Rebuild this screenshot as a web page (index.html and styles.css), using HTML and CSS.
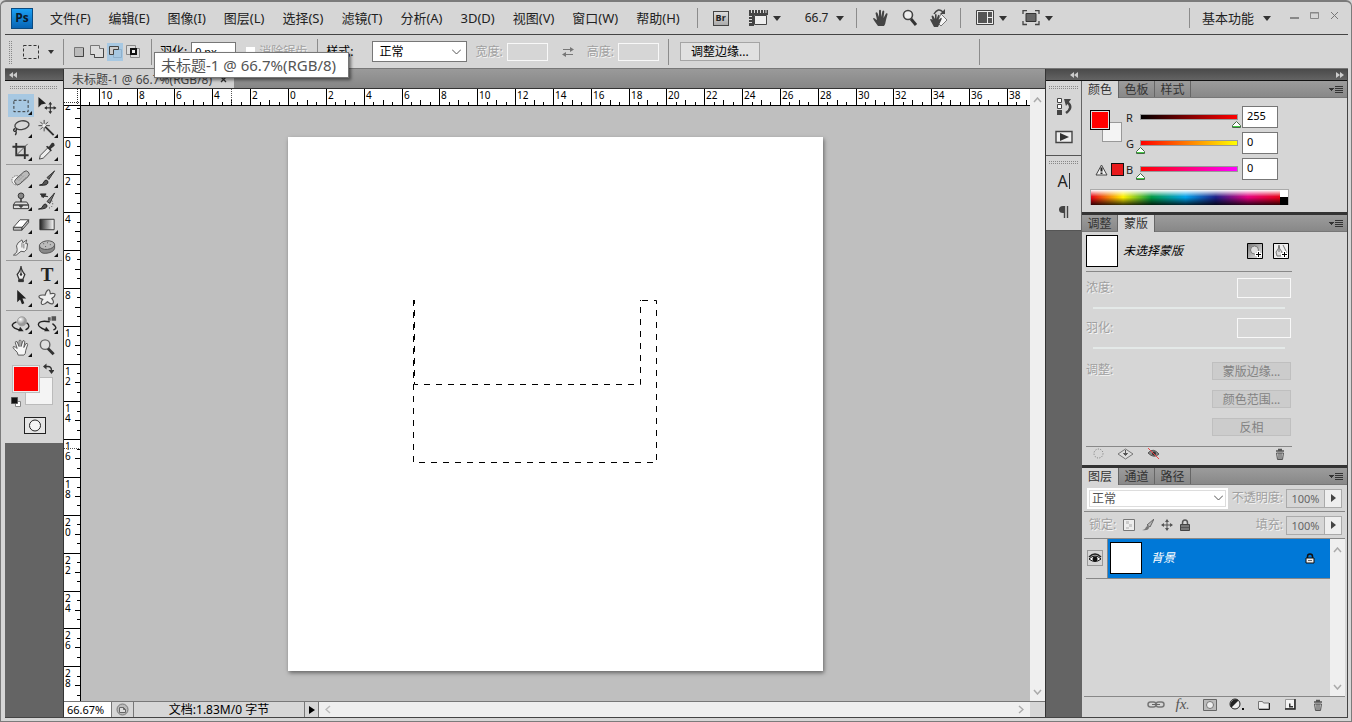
FILE: index.html
```html
<!DOCTYPE html>
<html lang="zh-CN">
<head>
    <meta charset="UTF-8">
    <meta name="viewport" content="width=device-width, initial-scale=1.0">
    <title>未标题-1 @ 66.7%(RGB/8)</title>
    <link rel="stylesheet" href="styles.css">
</head>
<body>
<div class="window">
    <header class="app-bar">
        <span class="logo">Ps</span>
        <nav class="menu">
            <button>文件(F)</button>
            <button>编辑(E)</button>
            <button>图像(I)</button>
            <button>图层(L)</button>
            <button>选择(S)</button>
            <button>滤镜(T)</button>
            <button>分析(A)</button>
            <button>3D(D)</button>
            <button>视图(V)</button>
            <button>窗口(W)</button>
            <button>帮助(H)</button>
        </nav>
        <span class="sep"></span>
        <div class="app-tools">
            <button class="bridge" aria-label="Bridge">Br</button>
            <button class="drop" aria-label="查看额外内容">
                <svg width="19" height="16" viewBox="0 0 19 16"><path d="M0 0h19v5H0zM0 5h5v11H0z" fill="#444"/><path d="M2.500 0v3M5.500 0v3M8.500 0v3M11.500 0v3M14.500 0v3M17 0v3M0 6.500h3M0 9.500h3M0 12.500h3" stroke="#ddd"/><path d="M5.500 5.500h12v9h-12z" fill="#eee" stroke="#444"/></svg>
                <i class="caret"></i>
            </button>
            <button class="drop zoom-level">66.7<i class="caret"></i></button>
        </div>
        <span class="sep"></span>
        <div class="app-tools app-tools-view">
            <button aria-label="抓手"><svg width="18" height="18" viewBox="0 0 18 18"><path d="M6 17C4 14 2 12 1 9.500q1-1.500 3 1L5 11 3.500 4q1-1.500 2 0L7 8V1.500q1-1.300 2 0V8l1.500-6q1.200-1 1.800.4L11.500 9 14 4.500q1.500-.8 1.600.6L14 11q-.5 4-2 6z" fill="#444"/></svg></button>
            <button aria-label="缩放"><svg width="16" height="18" viewBox="0 0 16 18"><circle cx="6" cy="6" r="4.500" fill="#eee" stroke="#444" stroke-width="1.600"/><path d="M9 10l5 6" stroke="#333" stroke-width="3"/></svg></button>
            <button aria-label="旋转视图"><svg width="18" height="20" viewBox="0 0 18 20"><path d="M4 6Q8-1 13 4" fill="none" stroke="#444" stroke-width="1.500"/><path d="M15 1v5h-5z" fill="#444"/><path d="M11 6l6 6-6 6-4-4z" fill="#f4f4f4" stroke="#777"/><path d="M4 19L0 11.500q1-1.200 2.500.5L1.500 8q1-1 1.800 0L5 11V6.500q.8-1 1.600 0V11L8 7.200q1-.8 1.500.2L8.500 12 11 9.800q1.200 0 .6 1.400L8 19z" fill="#444"/></svg></button>
        </div>
        <span class="sep"></span>
        <div class="app-tools app-tools-screen">
            <button class="drop" aria-label="排列文档"><svg width="18" height="16" viewBox="0 0 18 16"><path d="M.5.500h17v14H.5z" fill="#eee" stroke="#444"/><path d="M2 2h9v11H2zM12 2h4v5h-4zM12 8h4v5h-4z" fill="#555"/></svg><i class="caret"></i></button>
            <button class="drop" aria-label="屏幕模式"><svg width="18" height="16" viewBox="0 0 18 16"><path d="M4 3.500h10v8H4z" fill="#666" stroke="#333"/><path d="M1 4V.5h4M13 .5h4V4M17 11v3.500h-4M5 14.500H1V11" fill="none" stroke="#444" stroke-width="1.300"/></svg><i class="caret"></i></button>
        </div>
        <div class="workspace-switch">
            <span class="sep"></span>
            <button class="drop">基本功能<i class="caret"></i></button>
        </div>
        <div class="window-buttons">
            <button aria-label="最小化"><svg width="11" height="14" viewBox="0 0 11 14"><path d="M1 6h9v2H1z" fill="#888"/></svg></button>
            <button aria-label="最大化"><svg width="11" height="14" viewBox="0 0 11 14"><path d="M1.500 1.500h8v6h-8zM1 2h9" fill="none" stroke="#888"/></svg></button>
            <button aria-label="关闭"><svg width="11" height="14" viewBox="0 0 11 14"><path d="M2 1l7 7M9 1L2 8" stroke="#777"/></svg></button>
        </div>
    </header>

    <div class="options-bar">
        <span class="grip-v"></span>
        <button class="drop current-tool" aria-label="矩形选框工具"><svg width="16" height="14" viewBox="0 0 16 14"><path d="M.5.500h15v13H.5z" fill="none" stroke="#333" stroke-dasharray="3 2"/></svg><i class="caret"></i></button>
        <span class="sep"></span>
        <div class="modes">
            <button aria-label="新选区"><svg width="16" height="16" viewBox="0 0 16 16"><path d="M3.500 3.500h9v9h-9z" fill="#bbb" stroke="#777"/><path d="M4 12.500h8.500V4" fill="none" stroke="#444"/></svg></button>
            <button aria-label="添加到选区"><svg width="16" height="16" viewBox="0 0 16 16"><path d="M1.500 1.500h9v3h4v9h-9v-3h-4z" fill="#ddd" stroke="#777"/><path d="M1.500 10.500h4v3h9v-9" fill="none" stroke="#444"/></svg></button>
            <button class="on" aria-label="从选区减去"><svg width="16" height="16" viewBox="0 0 16 16"><path d="M6.500 5.500h8v8h-8z" fill="none" stroke="#8fb0cb"/><path d="M2.500 2.500h9v3h-5v5h-4z" fill="#ccc" stroke="#444"/></svg></button>
            <button aria-label="与选区交叉"><svg width="16" height="16" viewBox="0 0 16 16"><path d="M1.500 1.500h9v9h-9zM5.500 4.500h9v9h-9z" fill="#ddd" stroke="#888"/><path d="M6 5h5v5H6z" fill="#eee" stroke="#111" stroke-width="2"/></svg></button>
        </div>
        <span class="sep"></span>
        <label class="field feather">羽化: <input type="text" value="0 px"></label>
        <label class="field antialias disabled"><input type="checkbox" disabled>消除锯齿</label>
        <span class="sep"></span>
        <label class="field style-field" for="style">样式:</label>
        <select id="style" class="style-select"><option>正常</option></select>
        <label class="field size disabled">宽度:<input type="text" disabled></label>
        <button class="swap" aria-label="高度和宽度互换" disabled><svg width="12" height="12" viewBox="0 0 12 12"><path d="M1 3.500h9M2 8.500h9" stroke="#777"/><path d="M8 1l4 2.500L8 6zM4 6L0 8.500 4 11z" fill="#777"/></svg></button>
        <label class="field size disabled">高度:<input type="text" disabled></label>
        <span class="sep"></span>
        <button class="refine">调整边缘...</button>
        <span class="sep sep-end"></span>
    </div>

    <main class="workspace">
        <aside class="toolbox">
            <div class="dock-head"><svg width="8" height="6" viewBox="0 0 8 6"><path d="M4 0v6L0 3zM8 0v6L4 3z" fill="#ccc"/></svg></div>
            <div class="tools">
                <span class="grip-h"></span>
                <div class="tool-group">
                    <button class="tool more on" aria-label="矩形选框"><svg width="20" height="20" viewBox="0 0 20 20"><path d="M2.500 4.500h15v12h-15z" fill="none" stroke="#333" stroke-dasharray="3 2"/></svg></button>
                    <button class="tool" aria-label="移动"><svg width="20" height="20" viewBox="0 0 20 20"><path d="M1 1v11l3-3 5-1z" fill="#222"/><path d="M13.500 7v11M8 12.500h11" stroke="#333" stroke-width="1.200"/><path d="M13.500 6l2 3h-4zM13.500 19l2-3h-4zM7 12.500l3-2v4zM20 12.500l-3-2v4z" fill="#333"/></svg></button>
                    <button class="tool more" aria-label="套索"><svg width="20" height="20" viewBox="0 0 20 20"><ellipse cx="11" cy="6.500" rx="7.500" ry="4.500" fill="none" stroke="#444" stroke-width="1.400" transform="rotate(-10 11 6.500)"/><path d="M4 10q-3 1-1 3 3 0 2-3M4 12q2 2 0 5" fill="none" stroke="#333" stroke-width="1.400"/></svg></button>
                    <button class="tool more" aria-label="魔棒"><svg width="20" height="20" viewBox="0 0 20 20"><path d="M7 1v12M1 7h12M3 3l8 8M11 3l-8 8" stroke="#444"/><circle cx="7" cy="7" r="2" fill="#eee"/><path d="M8 8l9 9" stroke="#333" stroke-width="2"/></svg></button>
                    <button class="tool more" aria-label="裁剪"><svg width="20" height="20" viewBox="0 0 20 20"><path d="M5 1v13h13M1 5h13v13" fill="none" stroke="#333" stroke-width="2"/><path d="M5 14L17 2" stroke="#555"/></svg></button>
                    <button class="tool more" aria-label="吸管"><svg width="20" height="20" viewBox="0 0 20 20"><path d="M2 18l1-4 8-8 3 3-8 8z" fill="#eee" stroke="#444"/><path d="M9 5l1-1 2 1 3-4q3-1 3 3l-4 3 1 2-1 1z" fill="#333"/></svg></button>
                </div>
                <div class="tool-group">
                    <button class="tool more" aria-label="污点修复画笔"><svg width="22" height="20" viewBox="0 0 22 20"><circle cx="6" cy="12" r="5" fill="#f4f4f4" stroke="#444" stroke-dasharray="1 1"/><rect x="3" y="6" width="19" height="7" rx="3.500" fill="#bbb" stroke="#555" transform="rotate(-42 12 10)"/><path d="M9 12l5-5M11 14l5-5M7 11l5-5" stroke="#666" stroke-dasharray="1 2"/></svg></button>
                    <button class="tool more" aria-label="画笔"><svg width="20" height="20" viewBox="0 0 20 20"><path d="M10 9l8-7-6 9z" fill="#666" stroke="#333"/><path d="M2 17q4 0 5-4 2-3 4 0 1 5-9 4z" fill="#555" stroke="#222"/></svg></button>
                    <button class="tool more" aria-label="仿制图章"><svg width="20" height="20" viewBox="0 0 20 20"><circle cx="10" cy="4" r="3" fill="#888" stroke="#333"/><path d="M9 7h2v4H9z" fill="#555"/><path d="M4 10.500h12l2 3v4H2v-4z" fill="#ddd" stroke="#333"/><path d="M2 13h16v1.500H2zM7 14h6l-3 3z" fill="#444"/></svg></button>
                    <button class="tool more" aria-label="历史记录画笔"><svg width="20" height="20" viewBox="0 0 20 20"><path d="M3 2h6L6 6zM4 5q4-2 7 0" fill="#333" stroke="#333"/><path d="M10 10l8-9-5 11z" fill="#777" stroke="#333"/><path d="M1 18q4 0 5-4 2-3 4 0 1 4-9 4z" fill="#555" stroke="#222"/><path d="M15 9q3 6-3 8" fill="none" stroke="#333" stroke-dasharray="1 2"/></svg></button>
                    <button class="tool more" aria-label="橡皮擦"><svg width="20" height="20" viewBox="0 0 20 20"><path d="M2 13l7-8h9l-7 8z" fill="#fff" stroke="#444"/><path d="M2 13h9v3H2zM11 13l7-8v3l-7 8z" fill="#bbb" stroke="#444"/></svg></button>
                    <button class="tool more" aria-label="渐变"><svg width="20" height="20" viewBox="0 0 20 20"><defs><linearGradient id="grad"><stop offset="0" stop-color="#222"/><stop offset="1" stop-color="#fff"/></linearGradient></defs><path d="M2.500 4.500h15v11h-15z" fill="url(#grad)" stroke="#333"/></svg></button>
                    <button class="tool more" aria-label="涂抹"><svg width="20" height="20" viewBox="0 0 20 20"><path d="M2 18q5-3 4-6-2-4 1-7l4-3 1 3 4-3-1 4 2 0-1 6q-2 4-6 2l-5 4z" fill="#eee" stroke="#555"/><path d="M11 5v5M13 6v5" stroke="#777"/></svg></button>
                    <button class="tool more" aria-label="海绵"><svg width="20" height="20" viewBox="0 0 20 20"><path d="M2 8v4q1 5 8 4 7-1 8-5V7z" fill="#888" stroke="#555"/><ellipse cx="10" cy="7.500" rx="8" ry="4.500" fill="#bbb" stroke="#555" transform="rotate(-6 10 7)"/><path d="M6 6h1M10 5h1M13 7h1M8 9h1" stroke="#555"/></svg></button>
                </div>
                <div class="tool-group">
                    <button class="tool more" aria-label="钢笔"><svg width="20" height="20" viewBox="0 0 20 20"><path d="M10 1q0 4 4 9l-2 5H8l-2-5q4-5 4-9z" fill="#eee" stroke="#333" stroke-width="1.300"/><path d="M10 3v7M7.500 15.500h5v2h-5z" stroke="#333" fill="#333"/><circle cx="10" cy="10" r="1.300" fill="#333"/></svg></button>
                    <button class="tool more type" aria-label="横排文字">T</button>
                    <button class="tool more" aria-label="路径选择"><svg width="20" height="20" viewBox="0 0 20 20"><path d="M6 2v13l3-3 2 5 2.500-1-2-5h4z" fill="#222"/></svg></button>
                    <button class="tool more" aria-label="自定形状"><svg width="20" height="20" viewBox="0 0 20 20"><path d="M11 2q2-1 2.500 4 5-1 5 1 0 2-3.500 4 3 4 1 5.500-2 1-5.500-2-4 4-6 2.500-1.500-1.500 1-5-4-1-4-3 0-2 6.500-1.500 1-4.500 3-5.500z" fill="#eee" stroke="#555" stroke-width="1.200"/></svg></button>
                </div>
                <div class="tool-group">
                    <button class="tool more" aria-label="3D 旋转"><svg width="22" height="20" viewBox="0 0 22 20"><defs><radialGradient id="ball" cx=".35" cy=".3"><stop offset="0" stop-color="#fff"/><stop offset="1" stop-color="#999"/></radialGradient></defs><path d="M6 7q-8 3-2 7l6 2.500M17 8q6 4-1 8" fill="none" stroke="#222" stroke-width="1.500"/><path d="M8 17.500h6l-4-5z" fill="#222"/><circle cx="12" cy="6.500" r="5" fill="url(#ball)" stroke="#999"/></svg></button>
                    <button class="tool more" aria-label="3D 环绕"><svg width="22" height="20" viewBox="0 0 22 20"><path d="M14 7Q2 5 1.500 10q0 3 8 6M17 9q7 5 1 7" fill="none" stroke="#222" stroke-width="1.500"/><path d="M8 17.500h6l-4-5z" fill="#222"/><path d="M16 1h5v5h-5zM12 2h3v4h-3z" fill="#555"/></svg></button>
                    <button class="tool more" aria-label="抓手"><svg width="20" height="20" viewBox="0 0 20 20"><path d="M7 18q0-3-4-6-2-2-1-3 2 0 4 2L4 5q0-2 2-1l2 5V3q1-2 2 0v6l2-6q1.500-1 2 1l-1 6 2-4q2-1 2 1l-2 6q0 4-2 5z" fill="#f6f6f6" stroke="#555"/></svg></button>
                    <button class="tool" aria-label="缩放"><svg width="20" height="20" viewBox="0 0 20 20"><circle cx="8" cy="7" r="5" fill="#e0e0e0" stroke="#666" stroke-width="1.500"/><path d="M11 11l6 6" stroke="#333" stroke-width="3"/></svg></button>
                </div>
                <div class="color-pair">
                    <button class="back" aria-label="背景色"></button>
                    <button class="fore" aria-label="前景色"></button>
                    <svg class="swap-colors" width="11" height="11" viewBox="0 0 11 11"><path d="M2 3.500h3q3.500 0 3.500 4" fill="none" stroke="#333" stroke-width="1.300"/><path d="M0 3.500L3.500.5v6zM5.500 7h6l-3 4z" fill="#333"/></svg>
                    <svg class="default-colors" width="11" height="11" viewBox="0 0 11 11"><path d="M4.500 4.500h5v5h-5z" fill="#fff" stroke="#888"/><path d="M.5.500h6v6h-6z" fill="#111" stroke="#555"/></svg>
                </div>
                <button class="quick-mask" aria-label="快速蒙版"><svg width="20" height="15" viewBox="0 0 20 15"><circle cx="10" cy="7.500" r="5.500" fill="#f4f4f4" stroke="#222"/></svg></button>
            </div>
        </aside>

        <section class="document">
            <div class="doc-tabs">
                <div class="doc-tab">未标题-1 @ 66.7%(RGB/8)<button aria-label="关闭文档"><svg width="7" height="7" viewBox="0 0 7 7"><path d="M1 1l5 5M6 1L1 6" stroke="#333" stroke-width="1.300"/></svg></button></div>
            </div>
            <div class="doc-view">
                <div class="ruler-corner"></div>
                <svg class="ruler ruler-h" id="ruler-h"></svg>
                <svg class="ruler ruler-v" id="ruler-v"></svg>
                <div class="canvas">
                    <div class="page" id="page">
                        <svg width="535" height="534" viewBox="0 0 535 534"><g fill="none" stroke="#000" stroke-dasharray="6 6"><path d="M125.500 163V325.500H368.500V163.500H352.500"/><path d="M126.500 163V247.500H352.500V163" stroke-dashoffset="2"/></g></svg>
                    </div>
                </div>
                <div class="scroll scroll-v">
                    <svg width="9" height="6" viewBox="0 0 9 6"><path d="M1 5l3.500-4L8 5" fill="none" stroke="#aaa" stroke-width="1.500"/></svg>
                    <svg width="9" height="6" viewBox="0 0 9 6"><path d="M1 1l3.500 4L8 1" fill="none" stroke="#aaa" stroke-width="1.500"/></svg>
                </div>
            </div>
            <footer class="status">
                <input class="status-zoom" type="text" value="66.67%" aria-label="缩放比例">
                <span class="status-icon"><svg width="13" height="13" viewBox="0 0 13 13"><circle cx="6.500" cy="6.500" r="5.500" fill="#bbb" stroke="#777"/><path d="M3.500 4.500h4l2 2v3h-6zM7.500 4.500v2h2" fill="#ddd" stroke="#666"/></svg></span>
                <span class="status-text">文档:1.83M/0 字节</span>
                <button class="status-more" aria-label="更多"><svg width="6" height="8" viewBox="0 0 6 8"><path d="M0 0l6 4-6 4z" fill="#000"/></svg></button>
                <div class="scroll scroll-h">
                    <svg width="6" height="9" viewBox="0 0 6 9"><path d="M5 1L1 4.500 5 8" fill="none" stroke="#bbb" stroke-width="1.500"/></svg>
                    <svg width="6" height="9" viewBox="0 0 6 9"><path d="M1 1l4 3.500L1 8" fill="none" stroke="#aaa" stroke-width="1.500"/></svg>
                </div>
            </footer>
        </section>

        <aside class="dock">
            <div class="dock-head">
                <svg width="8" height="6" viewBox="0 0 8 6"><path d="M4 0v6L0 3zM8 0v6L4 3z" fill="#ccc"/></svg>
                <svg width="8" height="6" viewBox="0 0 8 6"><path d="M0 0v6l4-3zM4 0v6l4-3z" fill="#ccc"/></svg>
            </div>
            <div class="icon-strip">
                <div class="strip-group">
                    <span class="grip-h"></span>
                    <button aria-label="历史记录"><svg width="18" height="18" viewBox="0 0 18 18"><path d="M2.500 1.500h4v4h-4zM2.500 7.500h4v4h-4z" fill="#fff" stroke="#444"/><path d="M2 13h5v5H2z" fill="#444"/><path d="M11 16q8-6 1-11" fill="none" stroke="#444" stroke-width="2.500"/><path d="M9 2h7l-5 7z" fill="#444"/></svg></button>
                    <button aria-label="动作"><svg width="18" height="18" viewBox="0 0 18 18"><path d="M1 3.500h16v11H1z" fill="#eee" stroke="#444" stroke-width="1.400"/><path d="M5 5l9 4-9 4z" fill="#333"/></svg></button>
                </div>
                <div class="strip-group">
                    <span class="grip-h"></span>
                    <button aria-label="字符"><span class="character">A</span></button>
                    <button aria-label="段落"><svg width="18" height="18" viewBox="0 0 18 18"><path d="M13 3H8Q4 3 4 6.500T8 10h1V3" fill="#444"/><path d="M9.500 3v12M12.500 3v12" stroke="#444" stroke-width="1.400"/></svg></button>
                </div>
            </div>

            <div class="panels">
                <section class="panel">
                    <div class="panel-tabs"><button class="on">颜色</button><button>色板</button><button>样式</button><span class="panel-menu"></span></div>
                    <div class="color-panel">
                        <div class="swatches">
                            <span class="swatch-back"></span>
                            <span class="swatch-fore"></span>
                            <div class="gamut"><svg width="13" height="12" viewBox="0 0 13 12"><path d="M6.500 1L12 11H1z" fill="#eee" stroke="#444"/><path d="M6.500 3.500v4M6.500 8.500v1.500" stroke="#222" stroke-width="2"/></svg><i></i></div>
                        </div>
                        <div class="channels">
                            <label for="r">R</label><input class="channel channel-r" type="range" max="255" value="255" aria-label="红色"><input class="value" id="r" type="text" value="255">
                            <label for="g">G</label><input class="channel channel-g" type="range" max="255" value="0" aria-label="绿色"><input class="value" id="g" type="text" value="0">
                            <label for="b">B</label><input class="channel channel-b" type="range" max="255" value="0" aria-label="蓝色"><input class="value" id="b" type="text" value="0">
                        </div>
                        <div class="ramp"><i class="spectrum"></i><i class="mono"></i></div>
                    </div>
                </section>

                <section class="panel">
                    <div class="panel-tabs"><button>调整</button><button class="on">蒙版</button><span class="panel-menu"></span></div>
                    <div class="mask-panel">
                        <div class="mask-head">
                            <span class="thumb"></span>
                            <em>未选择蒙版</em>
                            <button aria-label="添加像素蒙版"><svg width="16" height="16" viewBox="0 0 16 16"><defs><linearGradient id="px" x2="1" y2="1"><stop offset="0" stop-color="#777"/><stop offset="1" stop-color="#eee"/></linearGradient></defs><path d="M.5.500h15v15H.5z" fill="url(#px)" stroke="#000"/><circle cx="7.500" cy="7" r="4" fill="#ddd" stroke="#777"/><path d="M11.500 8v7M8 11.500h7" stroke="#fff" stroke-width="3"/><path d="M11.500 9v5M9 11.500h5" stroke="#000"/></svg></button>
                            <button aria-label="添加矢量蒙版"><svg width="16" height="16" viewBox="0 0 16 16"><path d="M.5.500h15v15H.5z" fill="#eee" stroke="#000"/><path d="M6 2q0 4-3 7l1 4h4l1-4Q6 6 6 2zM6 3v6M10 2l3 6v3" fill="#ddd" stroke="#777"/><path d="M11.500 8v7M8 11.500h7" stroke="#fff" stroke-width="3"/><path d="M11.500 9v5M9 11.500h5" stroke="#000"/></svg></button>
                        </div>
                        <label class="mask-row disabled">浓度:<input type="text" disabled></label>
                        <input class="mask-slider" type="range" disabled aria-label="浓度">
                        <label class="mask-row disabled">羽化:<input type="text" disabled></label>
                        <input class="mask-slider" type="range" disabled aria-label="羽化">
                        <div class="mask-adjust">
                            <span class="disabled">调整:</span>
                            <div class="mask-buttons">
                                <button disabled>蒙版边缘...</button>
                                <button disabled>颜色范围...</button>
                                <button disabled>反相</button>
                            </div>
                        </div>
                        <div class="mask-foot">
                            <svg width="11" height="11" viewBox="0 0 11 11"><circle cx="5.500" cy="5.500" r="4.500" fill="none" stroke="#777" stroke-dasharray="1 1.500"/></svg>
                            <svg width="17" height="12" viewBox="0 0 17 12"><path d="M8.500 1L16 6l-7.500 5L1 6z" fill="#ddd" stroke="#777"/><path d="M8.500 2v4M6.500 5.500h4l-2 2z" stroke="#555" fill="#555"/></svg>
                            <svg width="13" height="13" viewBox="0 0 13 13"><path d="M1 6q5-6 11 1-5 5-11-1z" fill="#888" stroke="#555"/><circle cx="7" cy="6.500" r="2" fill="#333"/><path d="M1 1l11 11" stroke="#e44"/></svg>
                            <svg class="trash" width="10" height="12" viewBox="0 0 10 12"><path d="M1 3h8M3 1.500h4" stroke="#555" stroke-width="1.500"/><path d="M1.500 5h7l-1 6.500h-5z" fill="#ccc" stroke="#555"/><path d="M4 5v6M6 5v6" stroke="#555"/></svg>
                        </div>
                    </div>
                </section>

                <section class="panel panel-layers">
                    <div class="panel-tabs"><button class="on">图层</button><button>通道</button><button>路径</button><span class="panel-menu"></span></div>
                    <div class="layer-row">
                        <select class="blend" aria-label="混合模式"><option>正常</option></select>
                        <label class="amount disabled">不透明度:<input type="text" value="100%" disabled></label>
                        <button class="amount-more" aria-label="不透明度滑块"><i class="arrow"></i></button>
                    </div>
                    <div class="layer-row layer-locks">
                        <span class="disabled">锁定:</span>
                        <svg width="12" height="12" viewBox="0 0 12 12"><path d="M.5.500h11v11H.5z" fill="#eee" stroke="#777"/><path d="M3 2h3v3H3zM6 5h3v3H6zM3 8h3v2H3z" fill="#ccc"/></svg>
                        <svg width="12" height="12" viewBox="0 0 12 12"><path d="M5 6l7-6-4 8z" fill="#bbb" stroke="#666"/><path d="M0 11q3 0 4-3 2-2 3 0 0 4-7 3z" fill="#777"/></svg>
                        <svg width="12" height="12" viewBox="0 0 12 12"><path d="M6 1v10M1 6h10" stroke="#555"/><path d="M6 0l2 3H4zM6 12l2-3H4zM0 6l3-2v4zM12 6L9 4v4z" fill="#555"/></svg>
                        <svg width="10" height="12" viewBox="0 0 10 12"><path d="M2.500 6V4q0-3 2.500-3t2.500 3v2" fill="none" stroke="#555" stroke-width="1.500"/><path d="M.5 5.500h9v6h-9z" fill="#777" stroke="#444"/><path d="M1 8.500h8" stroke="#555"/></svg>
                        <label class="amount disabled">填充:<input type="text" value="100%" disabled></label>
                        <button class="amount-more" aria-label="填充滑块"><i class="arrow"></i></button>
                    </div>
                    <div class="layer-list">
                        <div class="layers">
                            <div class="layer">
                                <button class="eye" aria-label="图层可见性"><svg width="14" height="12" viewBox="0 0 14 12"><path d="M1 7q6-6 12 0-6 5-12 0z" fill="#fff" stroke="#111"/><circle cx="7" cy="7" r="2.500" fill="#111"/><path d="M1 5q6-6 12 0" fill="none" stroke="#222" stroke-width="1.500"/></svg></button>
                                <div class="layer-body">
                                    <span class="thumb"></span>
                                    <em>背景</em>
                                    <svg width="10" height="11" viewBox="0 0 10 11"><path d="M2.500 5V3.500Q2.500 1 5 1t2.500 2.500V5" fill="none" stroke="#111" stroke-width="1.500"/><path d="M1 5h8v5H1z" fill="#eee" stroke="#111"/><path d="M3 7.500h4" stroke="#666"/></svg>
                                </div>
                            </div>
                        </div>
                        <div class="scroll scroll-v">
                            <svg width="9" height="6" viewBox="0 0 9 6"><path d="M1 5l3.500-4L8 5" fill="none" stroke="#aaa" stroke-width="1.500"/></svg>
                            <svg width="9" height="6" viewBox="0 0 9 6"><path d="M1 1l3.500 4L8 1" fill="none" stroke="#aaa" stroke-width="1.500"/></svg>
                        </div>
                    </div>
                    <div class="layer-foot">
                        <svg width="18" height="10" viewBox="0 0 18 10"><rect x="1" y="2" width="8" height="5" rx="2.500" fill="none" stroke="#777" stroke-width="1.500"/><rect x="9" y="2" width="8" height="5" rx="2.500" fill="none" stroke="#777" stroke-width="1.500"/><path d="M5 4.500h8" stroke="#666"/></svg>
                        <span class="fx">fx<small>.</small></span>
                        <svg width="14" height="12" viewBox="0 0 14 12"><path d="M.5.500h13v11H.5z" fill="#bbb" stroke="#666"/><circle cx="7" cy="6" r="3.500" fill="#eee" stroke="#777"/></svg>
                        <svg width="16" height="13" viewBox="0 0 16 13"><circle cx="6" cy="6" r="5" fill="#eee" stroke="#222"/><path d="M2.500 9.500A5 5 0 0 1 9.500 2.500z" fill="#222"/><path d="M13 10h2v2h-2z" fill="#111"/></svg>
                        <svg width="12" height="10" viewBox="0 0 12 10"><path d="M.5 1.500h4l1 1.500h5.500v6H.5z" fill="#eee" stroke="#777"/><path d="M1 9.500h10.500V3" fill="none" stroke="#222"/></svg>
                        <svg width="11" height="11" viewBox="0 0 11 11"><path d="M.5.500h9v9h-9z" fill="#f4f4f4" stroke="#999"/><path d="M0 10h10V0" fill="none" stroke="#222" stroke-width="1.500"/><path d="M4 4.500h1.500V7H8v1.500H4z" fill="#333"/></svg>
                        <svg width="10" height="12" viewBox="0 0 10 12"><path d="M1 3h8M3 1.500h4" stroke="#555" stroke-width="1.500"/><path d="M1.500 5h7l-1 6.500h-5z" fill="#ccc" stroke="#555"/><path d="M4 5v6M6 5v6" stroke="#555"/></svg>
                    </div>
                </section>
            </div>
        </aside>
    </main>
    <div class="tooltip" role="tooltip">未标题-1 @ 66.7%(RGB/8)</div>
</div>
<script src="script.js"></script>
</body>
</html>
```

FILE: styles.css
```css
* {
    box-sizing: border-box;
}
body {
    margin: 0;
    font-family: "Noto Sans", "Noto Sans CJK SC", sans-serif;
    font-size: 12px;
    line-height: 16px;
    color: #222;
    background: #d6d6d6;
}
button, input, select {
    margin: 0;
    padding: 0;
    border: 0;
    border-radius: 0;
    background: none;
    font: inherit;
    color: inherit;
}
input {
    min-width: 0;
}
svg {
    display: block;
    flex: none;
}
.window {
    position: relative;
    display: flex;
    flex-direction: column;
    height: 100vh;
    min-height: 600px;
    padding: 0 3px 3px 4px;
    border: 1px solid #7b7b7b;
    border-top: 2px solid #7b7b7b;
    border-radius: 6px 6px 0 0;
    overflow: hidden;
    background: #d6d6d6;
}
.sep {
    flex: none;
    width: 1px;
    height: 20px;
    background: #8c8c8c;
}
.caret {
    width: 0;
    border: 4px solid transparent;
    border-top: 5px solid #333;
    border-bottom: 0;
}
.drop {
    display: flex;
    align-items: center;
    gap: 9px;
}
.disabled {
    color: #a0a0a0;
    text-shadow: 1px 1px #f4f4f4;
}

/* dotted drag handles */
.grip-h, .grip-v {
    flex: none;
    display: block;
    background:
        repeating-linear-gradient(#d6d6d6 0 1px, transparent 1px 2px),
        repeating-linear-gradient(to right, #888 0 1px, #d6d6d6 1px 2px);
}
.grip-h {
    height: 4px;
}
.grip-v {
    width: 4px;
    height: 24px;
}

/* application bar */
.app-bar {
    flex: none;
    display: flex;
    align-items: center;
    height: 32px;
    padding-left: 6px;
    font-size: 13px;
}
.logo {
    flex: none;
    width: 22px;
    height: 21px;
    border: 1px solid #0a4a80;
    background: linear-gradient(#1ba0f4, #0764b4);
    color: #0a1a2c;
    font: bold 12px/18px "Open Sans", sans-serif;
    text-align: center;
}
.menu {
    display: flex;
    gap: 18px;
    margin: 0 17px 0 17px;
    white-space: nowrap;
}
.app-tools {
    display: flex;
    align-items: center;
    gap: 20px;
    margin: 0 12px 0 15px;
}
.app-tools .drop {
    gap: 5px;
}
.bridge {
    width: 16px;
    height: 15px;
    border: 1px solid #444;
    background: linear-gradient(#ddd, #aaa);
    font: bold 9px/12px "Open Sans", sans-serif;
}
.app-tools .zoom-level {
    gap: 8px;
    margin-left: 4px;
    font-size: 12px;
}
.app-tools-view {
    gap: 12px;
}
.app-tools-screen {
    gap: 15px;
}
.workspace-switch {
    display: flex;
    align-items: center;
    gap: 12px;
    margin-left: auto;
    margin-right: 18px;
}
.window-buttons {
    display: flex;
    gap: 9px;
    margin-right: 8px;
}

/* options bar */
.options-bar {
    flex: none;
    display: flex;
    align-items: center;
    height: 35px;
    padding-left: 4px;
    border-top: 1px solid #444;
    border-bottom: 1px solid #777;
    white-space: nowrap;
}
.options-bar .sep {
    height: 26px;
}
.current-tool {
    margin: 0 9px 0 10px;
}
.options-bar .current-tool {
    gap: 9px;
}
.current-tool .caret {
    border-width: 4px 3px 0;
}
.modes {
    display: flex;
    gap: 2px;
    margin: 0 10px 0 7px;
}
.modes button {
    padding: 1px 0;
}
.modes .on {
    background: #a7c8e2;
}
.field {
    display: flex;
    align-items: center;
    gap: 4px;
}
.feather {
    margin: 0 10px 0 8px;
    color: #000;
}
.feather input {
    width: 45px;
    height: 20px;
    padding: 0 3px;
    border: 1px solid #777;
    background: #fff;
    font-size: 11px;
}
.antialias {
    margin-right: 10px;
}
.antialias input {
    appearance: none;
    width: 9px;
    height: 9px;
    background: #fff;
}
.style-field {
    margin: 0 19px 0 8px;
    color: #000;
}
.style-select, .blend {
    appearance: none;
    background: #fff url("data:image/svg+xml,%3Csvg xmlns='http://www.w3.org/2000/svg' width='9' height='6'%3E%3Cpath d='M0 .5l4.500 4.500L9 .5' fill='none' stroke='%23555'/%3E%3C/svg%3E") no-repeat right 5px center;
}
.style-select {
    width: 95px;
    height: 21px;
    padding-left: 6px;
    border: 1px solid #777;
    color: #000;
}
.size {
    margin-left: 8px;
}
.size input {
    width: 41px;
    height: 18px;
    border: 1px solid #f8f8f8;
}
.swap {
    margin: 0 5px 0 14px;
}
.size + .sep {
    margin-left: 9px;
}
.refine {
    width: 80px;
    height: 19px;
    margin: 0 219px 0 11px;
    border: 1px solid #a5a5a5;
    background: #e1e1e1;
    line-height: 16px;
    color: #000;
}

/* main area */
.workspace {
    flex: 1;
    display: flex;
    min-height: 0;
    border-right: 1px solid #444;
    border-bottom: 1px solid #444;
}
.dock-head {
    display: flex;
    justify-content: space-between;
    align-items: center;
    height: 12px;
    padding: 0 4px;
    border-bottom: 1px solid #111;
    background: linear-gradient(#4a4a4a, #636363);
}
.toolbox {
    flex: none;
    width: 59px;
    border-right: 1px solid #333;
    background: #646464;
}
.tools {
    padding: 4px 1px 9px;
    background: #d6d6d6;
}
.tools .grip-h {
    margin: 0 4px 5px;
}
.tool-group {
    display: grid;
    grid-template-columns: 26px 26px;
    grid-auto-rows: 23px;
    padding: 0 2px 1px;
    margin-bottom: 2px;
    border-bottom: 1px solid #999;
}
.tool-group:nth-of-type(4) {
    border-bottom: 0;
}
.tool {
    position: relative;
    display: grid;
    place-items: center;
}
.tool.on {
    background: #a7c8e2;
}
.tool svg {
    width: 20px;
    height: 19px;
}
.more::after {
    content: "";
    position: absolute;
    right: 2px;
    bottom: 2px;
    border: 2px solid #111;
    border-left-color: transparent;
    border-top-color: transparent;
}
.type {
    font: bold 19px/20px "Liberation Serif", serif;
}
.color-pair {
    position: relative;
    height: 44px;
    margin-top: 3px;
}
.fore, .back {
    position: absolute;
    width: 28px;
    height: 28px;
    border: 1px solid #bbb;
}
.fore {
    left: 6px;
    top: 2px;
    outline: 1px solid #eee;
    outline-offset: -2px;
    background: #f00;
}
.back {
    left: 19px;
    top: 14px;
    background: #f4f4f4;
}
.swap-colors {
    position: absolute;
    left: 37px;
    top: 0;
}
.default-colors {
    position: absolute;
    left: 5px;
    top: 34px;
}
.quick-mask {
    display: block;
    margin: 10px auto 0 18px;
    border: 1px solid #222;
    background: #e6e6e6;
}

/* document */
.document {
    flex: 1;
    display: flex;
    flex-direction: column;
    min-width: 0;
}
.doc-tabs {
    flex: none;
    height: 20px;
    border-bottom: 1px solid #333;
    background: linear-gradient(#9a9a9a, #868686);
}
.doc-tab {
    display: flex;
    align-items: center;
    gap: 8px;
    width: fit-content;
    height: 19px;
    padding: 2px 7px 0 8px;
    background: #d0d0d0;
    white-space: nowrap;
    color: #444;
}
.doc-view {
    flex: 1;
    display: grid;
    grid-template-columns: 17px 1fr 15px;
    grid-template-rows: 17px 1fr;
    min-height: 0;
}
.ruler-corner {
    border-right: 1px solid #000;
    border-bottom: 1px solid #000;
    background:
        repeating-linear-gradient(#333 0 1px, transparent 1px 2px) 13px 0 / 1px 100% no-repeat,
        repeating-linear-gradient(to right, #333 0 1px, transparent 1px 2px) 0 13px / 100% 1px no-repeat,
        #fff;
}
.ruler {
    width: 100%;
    height: 100%;
    background: #fff;
    overflow: hidden;
    font-size: 10px;
}
.ruler-h {
    border-bottom: 1px solid #000;
}
.ruler-v {
    grid-row: 2;
    grid-column: 1;
    border-right: 1px solid #000;
}
.canvas {
    display: flex;
    align-items: center;
    justify-content: center;
    min-width: 0;
    min-height: 0;
    overflow: hidden;
    background: #bfbfbf;
}
.page {
    flex: none;
    background: #fff;
    box-shadow: 1px 2px 4px #666;
}
.scroll {
    display: flex;
    align-items: center;
    justify-content: space-between;
    background: #efefef;
}
.scroll-v {
    flex-direction: column;
    width: 15px;
    padding: 8px 0 6px;
}
.doc-view .scroll-v {
    grid-row: 1 / 3;
    grid-column: 3;
}
.status {
    flex: none;
    display: flex;
    height: 16px;
    border-top: 1px solid #777;
    color: #000;
    line-height: 15px;
}
.status-zoom {
    width: 47px;
    padding-left: 3px;
    background: #fff;
    font-size: 11px;
}
.status-icon {
    display: grid;
    place-items: center;
    width: 23px;
    border-right: 1px solid #777;
    border-left: 1px solid #777;
}
.status-text {
    width: 170px;
    text-align: center;
}
.status-more {
    display: grid;
    place-items: center;
    width: 15px;
    border-right: 1px solid #777;
    border-left: 1px solid #777;
}
.scroll-h {
    flex: 1;
    margin-right: 15px;
    padding: 0 6px;
}

/* right dock */
.dock {
    flex: none;
    display: grid;
    grid-template-columns: 36px 265px;
    grid-template-rows: 12px 1fr;
    width: 302px;
    border-left: 1px solid #333;
    background: #646464;
}
.dock > .dock-head {
    grid-column: 1 / 3;
    padding: 0 3px 0 24px;
}
.strip-group {
    display: grid;
    justify-items: center;
    gap: 3px;
    padding: 4px 3px;
    margin-right: 1px;
    border-bottom: 1px solid #555;
    background: #d6d6d6;
}
.strip-group .grip-h {
    justify-self: stretch;
}
.strip-group button {
    display: grid;
    place-items: center;
    width: 28px;
    height: 28px;
}
.strip-group .character {
    padding-right: 1px;
    border-right: 1px solid #333;
    font-size: 16px;
}
.panels {
    display: flex;
    flex-direction: column;
    min-height: 0;
}
.panel {
    flex: none;
    border-bottom: 3px solid #333;
    background: #d6d6d6;
}
.panel-tabs {
    flex: none;
    display: flex;
    height: 17px;
    border-bottom: 1px solid #777;
    background: linear-gradient(#9c9c9c, #888);
}
.panel-tabs button {
    width: 36px;
    height: 16px;
    border-right: 1px solid #666;
    line-height: 18px;
    color: #333;
}
.panel-tabs .on {
    width: 37px;
    height: 17px;
    background: #d6d6d6;
}
.panel-menu {
    width: 14px;
    height: 8px;
    margin: 5px 4px 0 auto;
    background:
        linear-gradient(#333, #333) 6px 0 / 8px 1px,
        linear-gradient(#333, #333) 6px 2px / 8px 1px,
        linear-gradient(#333, #333) 6px 4px / 8px 1px,
        linear-gradient(#333, #333) 6px 6px / 8px 1px,
        linear-gradient(#333, #333) 0 2px / 5px 1px,
        linear-gradient(#333, #333) 1px 3px / 3px 1px,
        linear-gradient(#333, #333) 2px 4px / 1px 1px;
    background-repeat: no-repeat;
}

.color-panel {
    display: grid;
    grid-template-columns: 36px 160px;
    padding: 8px 8px 7px;
}
.swatches {
    position: relative;
}
.swatch-fore, .swatch-back {
    position: absolute;
    width: 20px;
    height: 20px;
}
.swatch-fore {
    top: 4px;
    left: 0;
    border: 1px solid #000;
    outline: 1px solid #ddd;
    outline-offset: -2px;
    background: #f00;
}
.swatch-back {
    top: 16px;
    left: 12px;
    border: 1px solid #999;
    background: #f4f4f4;
}
.gamut {
    display: flex;
    align-items: center;
    gap: 3px;
    margin: 57px 0 0 5px;
}
.gamut i {
    width: 13px;
    height: 13px;
    border: 1px solid #111;
    background: #e8191b;
}
.channels {
    display: grid;
    grid-template-columns: 10px 105px 36px;
    grid-auto-rows: 22px;
    align-items: center;
    row-gap: 4px;
    font-size: 11px;
}
.channels label {
    padding-top: 2px;
}
.channels .value {
    margin-left: 1px;
    width: 36px;
    height: 22px;
    padding: 0 4px 3px;
    border: 1px solid #777;
    background: #fff;
    color: #000;
}
.channel {
    appearance: none;
    width: 105px;
    height: 16px;
    margin-top: 6px;
    background:
        linear-gradient(to right, var(--from), var(--to)) center 3px / calc(100% - 9px) 4px no-repeat,
        linear-gradient(#999, #999) center 2px / calc(100% - 7px) 6px no-repeat;
}
.channel-r {
    --from: #000;
    --to: #f00;
}
.channel-g {
    --from: #f00;
    --to: #ff0;
}
.channel-b {
    --from: #f00;
    --to: #f0f;
}
.channel::-webkit-slider-thumb {
    appearance: none;
    width: 9px;
    height: 7px;
    margin-top: 9px;
    background: url("data:image/svg+xml,%3Csvg xmlns='http://www.w3.org/2000/svg' width='9' height='7'%3E%3Cpath d='M.5 6.500V4.500l4-4 4 4v2z' fill='%23fff' stroke='%23464'/%3E%3Cpath d='M1 5.500h7' stroke='%234c4'/%3E%3C/svg%3E");
}
.ramp {
    grid-column: 1 / 3;
    display: flex;
    width: 199px;
    height: 16px;
    margin-top: 9px;
    border: 1px solid #aaa;
    border-bottom: 0;
}
.spectrum {
    flex: 1;
    background:
        linear-gradient(#fff, rgba(255, 255, 255, 0) 45%, rgba(0, 0, 0, 0) 50%, rgba(0, 0, 0, .8)),
        linear-gradient(to right, #e60012, #fff000 17%, #009944 32%, #00a0e9 50%, #1d2088 66%, #e4007f 83%, #e60012);
}
.mono {
    width: 8px;
    background: linear-gradient(#fff 50%, #000 50%);
}

.thumb {
    flex: none;
    width: 32px;
    height: 32px;
    border: 1px solid #000;
    background: #fff;
}
.mask-panel {
    width: 210px;
    padding: 3px 0 2px 4px;
}
.mask-head {
    display: flex;
    align-items: center;
    gap: 10px;
    height: 37px;
    padding: 0 3px 5px 0;
    border-bottom: 1px solid #888;
    color: #000;
}
.mask-head em {
    flex: 1;
    margin-left: -5px;
}
.mask-row {
    display: flex;
    align-items: center;
    justify-content: space-between;
    height: 20px;
    margin-top: 6px;
    padding-right: 1px;
    line-height: 20px;
}
.mask-row input {
    width: 54px;
    height: 20px;
    border: 1px solid #f8f8f8;
}
.mask-slider {
    appearance: none;
    display: block;
    width: 192px;
    height: 2px;
    margin: 9px 0 9px 7px;
    background: #e4e9e8;
}
.mask-slider::-webkit-slider-thumb {
    appearance: none;
    width: 0;
    height: 0;
}
.mask-adjust {
    display: flex;
    justify-content: space-between;
    padding: 4px 1px 10px 0;
}
.mask-buttons {
    display: grid;
    gap: 10px;
}
.mask-buttons button {
    width: 79px;
    height: 18px;
    border: 1px solid #bfbfbf;
    background: #cccccc;
    line-height: 15px;
    color: #838383;
}
.mask-foot {
    display: flex;
    align-items: center;
    gap: 13px;
    height: 17px;
    padding: 0 7px 3px;
    border-top: 1px solid #888;
}
.mask-foot .trash {
    margin-left: auto;
}

.panel-layers {
    flex: 1;
    display: flex;
    flex-direction: column;
    min-height: 0;
    border-bottom: 0;
}
.layer-row {
    flex: none;
    display: flex;
    align-items: center;
    height: 27px;
    margin: 0 2px;
    padding: 0 3px;
    border-bottom: 1px solid #888;
    white-space: nowrap;
}
.blend {
    width: 141px;
    height: 21px;
    padding: 2px 0 0 5px;
    box-shadow: inset 0 0 0 2px #fff, inset 0 0 0 3px #ddd;
    color: #555;
}
.amount {
    display: flex;
    align-items: center;
    gap: 3px;
    margin-left: auto;
}
.amount input {
    width: 39px;
    height: 19px;
    border: 1px solid #aaa;
    text-align: center;
    color: #666;
    font-size: 11px;
}
.amount-more {
    display: grid;
    place-items: center;
    width: 17px;
    height: 19px;
    border: 1px solid #aaa;
    border-left: 0;
    background: #eee;
}
.arrow {
    border: 4px solid transparent;
    border-left: 5px solid #444;
    border-right: 0;
}
.layer-locks {
    gap: 7px;
    padding-left: 5px;
}
.layer-locks .amount-more {
    margin-left: -7px;
}
.layer-list {
    flex: 1;
    display: flex;
    min-height: 0;
    margin: 0 2px;
}
.layers {
    flex: 1;
}
.layer {
    display: flex;
    height: 40px;
    margin-left: 2px;
    border-bottom: 1px solid #888;
}
.eye {
    display: grid;
    place-items: center;
    width: 16px;
    height: 16px;
    margin: 11px 4px 0 1px;
    border: 1px solid #999;
}
.layer-body {
    flex: 1;
    display: flex;
    align-items: center;
    gap: 9px;
    padding: 0 15px 1px 2px;
    border-left: 1px solid #888;
    background: #0078d7;
    color: #fff;
}
.layer-body em {
    flex: 1;
}
.layer-foot {
    flex: none;
    display: grid;
    grid-auto-flow: column;
    grid-auto-columns: 27px;
    place-items: center;
    justify-content: end;
    height: 21px;
    margin: 0 2px;
    padding: 0 14px 5px 0;
    border-top: 1px solid #888;
}
.fx {
    font: italic 15px/14px "Liberation Serif", serif;
    color: #555;
}

.tooltip {
    position: absolute;
    left: 153px;
    top: 50px;
    padding: 0 12px 0 6px;
    border: 1px solid #777;
    background: #fff;
    box-shadow: 2px 2px 3px rgba(0, 0, 0, .5);
    color: #555;
    font-size: 15px;
    line-height: 24px;
    white-space: nowrap;
}
```

FILE: script.js
```js
// pixels per centimetre at 66.7%
const CM = 18.92;

function add(svg, name, attrs, text) {
    const el = document.createElementNS('http://www.w3.org/2000/svg', name);
    for (const key in attrs) el.setAttribute(key, attrs[key]);
    if (text !== undefined) el.textContent = text;
    svg.appendChild(el);
}

function drawRuler(svg, horizontal) {
    const box = svg.getBoundingClientRect();
    const page = document.getElementById('page').getBoundingClientRect();
    const origin = horizontal ? page.left - box.left : page.top - box.top;
    const length = horizontal ? box.width : box.height;
    svg.innerHTML = '';

    for (let i = -80; i < 200; i++) {
        const pos = Math.round(origin + i * CM / 2);
        if (pos < -40 || pos > length) continue;
        const size = i % 4 === 0 ? 16 : i % 2 === 0 ? 5 : 3;
        add(svg, 'rect', horizontal
            ? { x: pos, y: 16 - size, width: 1, height: size }
            : { x: 16 - size, y: pos, width: size, height: 1 });
        if (i % 4 !== 0) continue;

        const label = String(Math.abs(i / 2));
        if (horizontal) {
            add(svg, 'text', { x: pos + 2, y: 10 }, label);
        } else {
            label.split('').forEach((digit, n) => {
                add(svg, 'text', { x: 1, y: pos + 11 + n * 10 }, digit);
            });
        }
    }

    // cursor position
    const cursor = horizontal ? 150 : 342;
    add(svg, 'path', {
        d: horizontal ? `M${cursor}.5 0V16` : `M0 ${cursor}.5H16`,
        stroke: '#555',
        'stroke-dasharray': '1 1'
    });
}

function drawRulers() {
    drawRuler(document.getElementById('ruler-h'), true);
    drawRuler(document.getElementById('ruler-v'), false);
}

drawRulers();
window.addEventListener('resize', drawRulers);
```
